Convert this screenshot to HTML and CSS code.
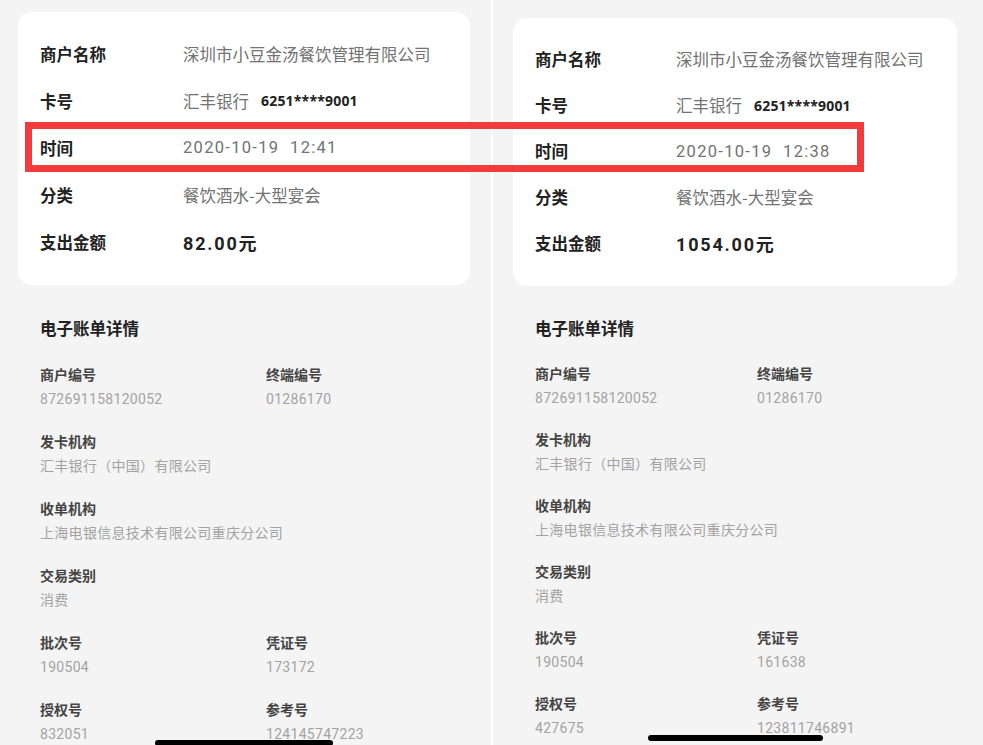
FILE: index.html
```html
<!DOCTYPE html>
<html>
<head>
    <meta charset="UTF-8">
    <title>账单对比</title>
    <link rel="stylesheet" href="styles.css">
</head>
<body>
  <div class="compare">
    <div class="phone phone-left">
      <div class="card">
        <div class="row"><span class="key">商户名称</span><span class="val">深圳市小豆金汤餐饮管理有限公司</span></div>
        <div class="row"><span class="key">卡号</span><span class="val">汇丰银行<b class="cardno">6251****9001</b></span></div>
        <div class="row"><span class="key">时间</span><span class="val time">2020-10-19&nbsp; 12:41</span></div>
        <div class="row"><span class="key">分类</span><span class="val">餐饮酒水-大型宴会</span></div>
        <div class="row"><span class="key">支出金额</span><span class="val amount">82.00元</span></div>
      </div>

      <h2 class="section-title">电子账单详情</h2>
      <div class="details">
        <div class="item"><div class="item-key">商户编号</div><div class="item-val">872691158120052</div></div>
        <div class="item"><div class="item-key">终端编号</div><div class="item-val">01286170</div></div>
        <div class="item wide"><div class="item-key">发卡机构</div><div class="item-val">汇丰银行（中国）有限公司</div></div>
        <div class="item wide"><div class="item-key">收单机构</div><div class="item-val">上海电银信息技术有限公司重庆分公司</div></div>
        <div class="item wide"><div class="item-key">交易类别</div><div class="item-val">消费</div></div>
        <div class="item"><div class="item-key">批次号</div><div class="item-val">190504</div></div>
        <div class="item"><div class="item-key">凭证号</div><div class="item-val">173172</div></div>
        <div class="item"><div class="item-key">授权号</div><div class="item-val">832051</div></div>
        <div class="item"><div class="item-key">参考号</div><div class="item-val">124145747223</div></div>
      </div>
      <div class="home-bar"></div>
    </div>

    <div class="divider"></div>

    <div class="phone phone-right">
      <div class="card">
        <div class="row"><span class="key">商户名称</span><span class="val">深圳市小豆金汤餐饮管理有限公司</span></div>
        <div class="row"><span class="key">卡号</span><span class="val">汇丰银行<b class="cardno">6251****9001</b></span></div>
        <div class="row"><span class="key">时间</span><span class="val time">2020-10-19&nbsp; 12:38</span></div>
        <div class="row"><span class="key">分类</span><span class="val">餐饮酒水-大型宴会</span></div>
        <div class="row"><span class="key">支出金额</span><span class="val amount">1054.00元</span></div>
      </div>

      <h2 class="section-title">电子账单详情</h2>
      <div class="details">
        <div class="item"><div class="item-key">商户编号</div><div class="item-val">872691158120052</div></div>
        <div class="item"><div class="item-key">终端编号</div><div class="item-val">01286170</div></div>
        <div class="item wide"><div class="item-key">发卡机构</div><div class="item-val">汇丰银行（中国）有限公司</div></div>
        <div class="item wide"><div class="item-key">收单机构</div><div class="item-val">上海电银信息技术有限公司重庆分公司</div></div>
        <div class="item wide"><div class="item-key">交易类别</div><div class="item-val">消费</div></div>
        <div class="item"><div class="item-key">批次号</div><div class="item-val">190504</div></div>
        <div class="item"><div class="item-key">凭证号</div><div class="item-val">161638</div></div>
        <div class="item"><div class="item-key">授权号</div><div class="item-val">427675</div></div>
        <div class="item"><div class="item-key">参考号</div><div class="item-val">123811746891</div></div>
      </div>
      <div class="home-bar"></div>
    </div>

    <!-- the red highlight drawn over both screenshots -->
    <div class="highlight"></div>
  </div>
</body>
</html>
```

FILE: styles.css
```css
html, body {
    margin: 0;
    height: 100%;
}
body {
    background: #f4f4f4;
    overflow: hidden;
    font-family: "Noto Sans CJK SC", "Noto Sans", sans-serif;
}

.compare {
    position: relative;
    display: flex;
    width: 983px;
    height: 745px;
}

.phone {
    position: relative;
    height: 745px;
    overflow: hidden;
    background: #f4f4f4;
}
.phone-left {
    width: 491px;
    padding: 12px 0 0 18px;
    box-sizing: border-box;
    --card-w: 452px;
    --row-h: 47px;
    --key-w: 143px;
    --col-w: 226px;
    --title-gap: 31px;
    --list-gap: 24px;
    --item-gap: 22px;
}
.phone-right {
    flex: 1;
    padding: 18px 0 0 20px;
    box-sizing: border-box;
    --card-w: 444px;
    --row-h: 46px;
    --key-w: 141px;
    --col-w: 222px;
    --title-gap: 30px;
    --list-gap: 23px;
    --item-gap: 21px;
}

.divider {
    width: 2px;
    background: #ffffff;
}

/* top summary card */
.card {
    width: var(--card-w);
    box-sizing: border-box;
    background: #ffffff;
    border-radius: 14px;
    padding: 18px 22px 20px;
}
.row {
    display: flex;
    align-items: center;
    height: var(--row-h);
    font-size: 16.5px;
}
.key {
    width: var(--key-w);
    flex-shrink: 0;
    color: #222;
    font-weight: 700;
}
.val {
    color: #727272;
    display: flex;
    align-items: center;
}
.cardno {
    margin-left: 12px;
    font-family: "Noto Sans", "Open Sans", sans-serif;
    font-size: 14px;
    font-weight: 700;
    color: #222;
    letter-spacing: 0.2px;
}
.time {
    font-family: Roboto, "Noto Sans", sans-serif;
    letter-spacing: 1.3px;
    white-space: pre;
}
.amount {
    font-family: Roboto, "Noto Sans CJK SC", sans-serif;
    font-size: 18px;
    font-weight: 700;
    color: #222;
    letter-spacing: 1.8px;
}

/* electronic bill section */
.section-title {
    margin: var(--title-gap) 0 0 22px;
    font-size: 16.5px;
    line-height: 24px;
    font-weight: 700;
    color: #222;
}
.details {
    display: grid;
    grid-template-columns: var(--col-w) 1fr;
    row-gap: var(--item-gap);
    margin: var(--list-gap) 0 0 22px;
}
.item.wide {
    grid-column: 1 / -1;
}
.item-key {
    font-size: 14px;
    line-height: 20px;
    font-weight: 600;
    color: #444;
}
.item-val {
    margin-top: 5px;
    font-family: Roboto, "Noto Sans CJK SC", sans-serif;
    font-size: 14px;
    line-height: 20px;
    color: #a3a3a3;
    letter-spacing: 0.3px;
}

.home-bar {
    position: absolute;
    left: 155px;
    width: 178px;
    height: 6px;
    border-radius: 3px;
    background: #000;
    top: 740px;
}
.phone-right .home-bar {
    width: 175px;
    top: 735px;
}

.highlight {
    position: absolute;
    left: 25px;
    top: 122px;
    width: 839px;
    height: 50px;
    box-sizing: border-box;
    border: 7px solid #f43b3b;
}
```
